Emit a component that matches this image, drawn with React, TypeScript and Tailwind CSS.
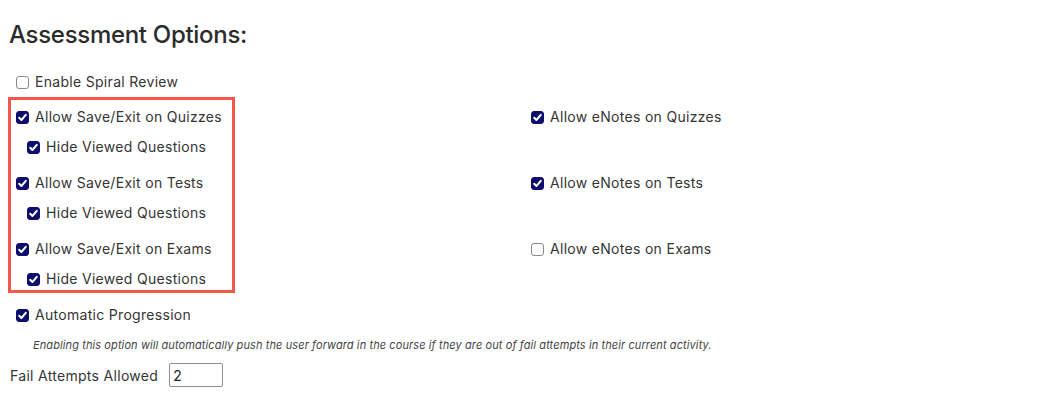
import { useState } from "react";

type BoxProps = { checked: boolean; onChange: (v: boolean) => void };

function Box({ checked, onChange }: BoxProps) {
  return (
    <span className="relative inline-flex h-[13px] w-[13px] shrink-0">
      <input
        type="checkbox"
        checked={checked}
        onChange={(e) => onChange(e.target.checked)}
        className="h-[13px] w-[13px] appearance-none rounded-[3px] border border-[#8a8a8a] bg-white checked:border-[#0d0d6b] checked:bg-[#0d0d6b]"
      />
      {checked && (
        <svg
          viewBox="0 0 13 13"
          className="pointer-events-none absolute inset-0 h-[13px] w-[13px]"
        >
          <path
            d="M3.2 6.8 L5.4 9 L9.8 3.8"
            fill="none"
            stroke="white"
            strokeWidth="2"
            strokeLinecap="round"
            strokeLinejoin="round"
          />
        </svg>
      )}
    </span>
  );
}

function Option({
  label,
  checked,
  onChange,
  indent = false,
}: {
  label: string;
  checked: boolean;
  onChange: (v: boolean) => void;
  indent?: boolean;
}) {
  return (
    <label
      className={`flex h-5 cursor-pointer items-center gap-[6px] ${indent ? "pl-[11px]" : ""}`}
    >
      <Box checked={checked} onChange={onChange} />
      <span className="leading-5">{label}</span>
    </label>
  );
}

const initial = {
  spiral: false,
  saveQuiz: true,
  hideQuiz: true,
  saveTest: true,
  hideTest: true,
  saveExam: true,
  hideExam: true,
  notesQuiz: true,
  notesTest: true,
  notesExam: false,
  autoProgress: true,
};

export default function App() {
  const [opts, setOpts] = useState(initial);
  const [attempts, setAttempts] = useState("2");
  const set = (k: keyof typeof initial) => (v: boolean) =>
    setOpts((o) => ({ ...o, [k]: v }));

  return (
    <div className="min-h-[405px] bg-white px-2 pt-px text-[14px] tracking-[0.3px] text-[#353535] [font-family:Inter,'Liberation_Sans',sans-serif]">
      <h2 className="pl-[1px] pt-[18px] text-[24px] font-medium leading-8 tracking-[-0.3px] text-[#2b2b2b]">
        Assessment Options:
      </h2>

      <div className="mt-[21px] pl-2">
        <Option label="Enable Spiral Review" checked={opts.spiral} onChange={set("spiral")} />
      </div>

      <div className="mt-[5px] flex items-start">
        <div className="flex w-[227px] flex-col border-[3px] border-[#f5574b] pb-[1px] pl-[5px] pt-[7px]">
          <Option label="Allow Save/Exit on Quizzes" checked={opts.saveQuiz} onChange={set("saveQuiz")} />
          <div className="mt-[10px]">
            <Option indent label="Hide Viewed Questions" checked={opts.hideQuiz} onChange={set("hideQuiz")} />
          </div>
          <div className="mt-4">
            <Option label="Allow Save/Exit on Tests" checked={opts.saveTest} onChange={set("saveTest")} />
          </div>
          <div className="mt-[10px]">
            <Option indent label="Hide Viewed Questions" checked={opts.hideTest} onChange={set("hideTest")} />
          </div>
          <div className="mt-4">
            <Option label="Allow Save/Exit on Exams" checked={opts.saveExam} onChange={set("saveExam")} />
          </div>
          <div className="mt-[10px]">
            <Option indent label="Hide Viewed Questions" checked={opts.hideExam} onChange={set("hideExam")} />
          </div>
        </div>

        <div className="ml-[296px] flex flex-col gap-[46px] pt-[10px]">
          <Option label="Allow eNotes on Quizzes" checked={opts.notesQuiz} onChange={set("notesQuiz")} />
          <Option label="Allow eNotes on Tests" checked={opts.notesTest} onChange={set("notesTest")} />
          <Option label="Allow eNotes on Exams" checked={opts.notesExam} onChange={set("notesExam")} />
        </div>
      </div>

      <div className="mt-3 pl-2">
        <Option label="Automatic Progression" checked={opts.autoProgress} onChange={set("autoProgress")} />
      </div>

      <p className="mt-[13px] pl-[25px] text-[11px] italic leading-[14px] tracking-[0.1px] text-[#444]">
        Enabling this option will automatically push the user forward in the course if they are out of fail attempts in their current activity.
      </p>

      <div className="mt-[11px] flex items-center gap-[11px] pl-[2px]">
        <span>Fail Attempts Allowed</span>
        <input
          type="text"
          value={attempts}
          onChange={(e) => setAttempts(e.target.value)}
          className="h-6 w-[54px] rounded-[2px] border border-[#8f8f8f] px-[3px] text-[14px] text-[#222] outline-none"
        />
      </div>
    </div>
  );
}
